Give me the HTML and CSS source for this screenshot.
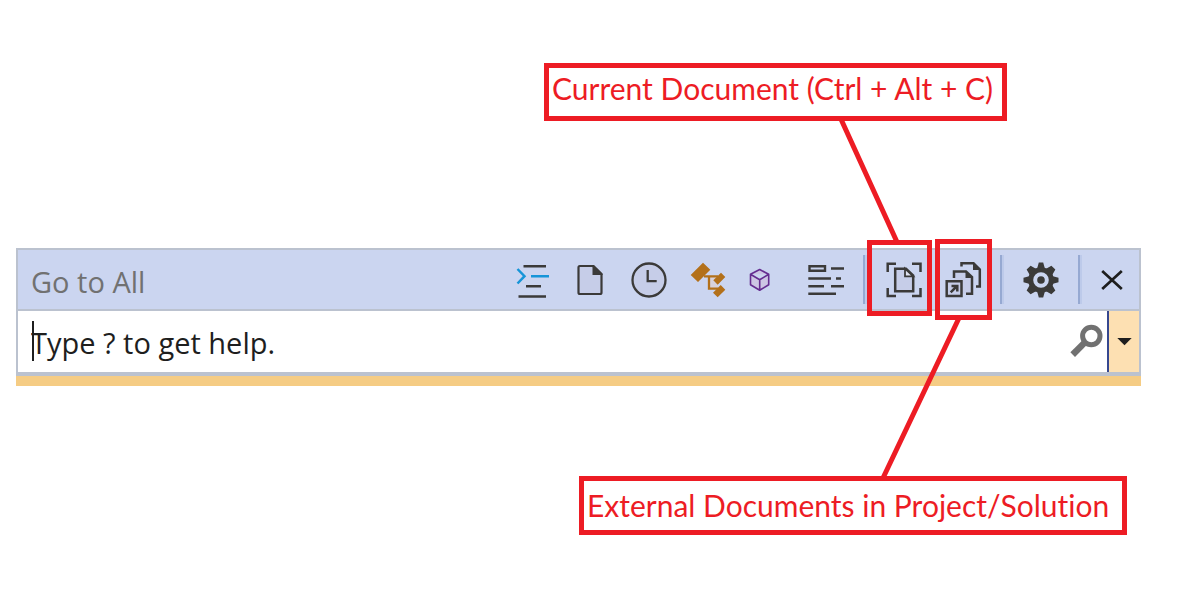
FILE: index.html
```html
<!DOCTYPE html>
<html lang="en">
<head>
<meta charset="utf-8">
<title>Go to All</title>
<link rel="stylesheet" href="styles.css">
</head>
<body>
<main class="stage">
  <section class="panel">
    <header class="toolbar">
      <h1 class="title">Go to All</h1>
      <button class="tool" aria-label="Go to line">
        <svg viewBox="502 250 59 59" fill="none" stroke="#3b3a39" stroke-width="2.5"><path d="M523.5 266.2H546M526 286.2H541M518.5 296.5H546"/><path stroke="#1695d8" d="M531 276.3H549M517.5 269L524.5 276.2L517.5 283.5"/></svg>
      </button>
      <button class="tool" aria-label="Files">
        <svg viewBox="561 250 59 59"><path d="M579.8 266H593L601.5 274.500V292.500Q601.5 294 600 294H580Q578.500 294 578.500 292.500V267.500Q578.500 266 579.800 266Z" fill="#c6cde8" stroke="#3b3a39" stroke-width="2.2"/><path d="M592.5 265H594L602.6 273.600V275H592.500Z" fill="#3b3a39"/></svg>
      </button>
      <button class="tool" aria-label="Recent files">
        <svg viewBox="620 250 59 59" fill="none" stroke="#3b3a39" stroke-width="2.3"><circle cx="649" cy="280" r="16.500" fill="#c6cde8"/><path d="M647.700 270V281.200H656.700"/></svg>
      </button>
      <button class="tool" aria-label="Types">
        <svg viewBox="679 250 59 59" fill="#b3701a"><path d="M708 276H718V289H709Z" fill="#d8d2dc"/><path d="M704 276.300H718M709 276V288.600H718" fill="none" stroke="#b3701a" stroke-width="2.300"/><path d="M703 262.700L710.300 269.700L698 282L690.700 275ZM721 272.700L725.300 277L717.700 284.700L713.300 280.300ZM720.700 285L725.300 289.700L717.700 297.300L713 292.700Z"/></svg>
      </button>
      <button class="tool" aria-label="Members">
        <svg viewBox="738 250 59 59" fill="#cdc6e4" stroke="#652d90" stroke-width="1.6" stroke-linejoin="round"><path d="M759.700 269.500L768.700 274.300V284.800L759.700 290.200L750.500 284.800V274.300ZM750.500 274.300L759.700 279.700L768.700 274.300M759.700 279.700V290.200"/></svg>
      </button>
      <button class="tool" aria-label="Symbols">
        <svg viewBox="797 250 59 59" fill="none" stroke="#3b3a39" stroke-width="2.400"><path d="M809.500 266.300H825V270.800H809.500ZM831 268.500H844M808.300 278.500H831M836 278.500H841M808.300 286.300H824M831 286.300H844M808.300 293.800H836"/></svg>
      </button>
      <span class="separator"></span>
      <button class="tool" aria-label="Current document (Ctrl + Alt + C)">
        <svg viewBox="875 250 59 59" fill="none" stroke="#3b3a39" stroke-width="2.500"><path d="M896 263.800H887.700V272M912 263.800H920.500V272M896 296H887.700V288M912 296H920.500V288"/><path fill="#c6cde8" d="M895.200 268.700H906L913.200 275.500V291.300H895.200Z"/><path fill="#dfe2f1" stroke-width="1.800" d="M905 268.500V276.300H913.200Z"/></svg>
      </button>
      <button class="tool" aria-label="External documents in project or solution">
        <svg viewBox="934 250 59 59" fill="none" stroke="#3b3a39" stroke-width="2.500"><path d="M961.500 266.500V263.300H973.500L979.800 269.500V286.500H976"/><path d="M973 262.500L980.500 270H973Z" fill="#3b3a39" stroke="none"/><path fill="#c6cde8" stroke="none" d="M954 271.500H966L972 277V293.700H962V280H954Z"/><path d="M954 278V271.500H966L972 277V293.700H966"/><path d="M965.500 270.500L973 278H965.500Z" fill="#3b3a39" stroke="none"/><path fill="#c6cde8" d="M946.700 281.300H961.500V296H946.700Z"/><path d="M950.700 292.300L957 286M951.500 286H957.300V291.500"/></svg>
      </button>
      <span class="separator"></span>
      <button class="tool" aria-label="Settings">
        <svg viewBox="1012 250 59 59"><g transform="translate(1041 280)" fill="#3b3a39"><circle r="12.800"/><path d="M-4 -11L-2.200 -17.500H2.200L4 -11ZM-4 11L-2.200 17.500H2.200L4 11ZM-11 -4L-17.500 -2.200V2.200L-11 4ZM11 -4L17.500 -2.200V2.200L11 4Z"/><path transform="rotate(45)" d="M-4.500 -11L-2.800 -17.500H2.800L4.500 -11ZM-4.500 11L-2.800 17.500H2.800L4.500 11ZM-11 -4.500L-17.500 -2.800V2.800L-11 4.500ZM11 -4.500L17.500 -2.800V2.800L11 4.500Z"/><circle r="5.800" fill="none" stroke="#cbd5f0" stroke-width="4"/></g></svg>
      </button>
      <span class="separator"></span>
      <button class="tool close" aria-label="Close">
        <svg viewBox="1090 250 49 59" fill="none" stroke="#1e1e1e" stroke-width="2.700"><path d="M1102.200 271L1121.800 289M1121.800 271L1102.200 289"/></svg>
      </button>
    </header>
    <div class="search">
      <span class="caret"></span>
      <input class="query" type="text" placeholder="Type ? to get help." aria-label="Search">
      <button class="find" aria-label="Find">
        <svg viewBox="1067 311 40 61" fill="none" stroke="#717171"><circle cx="1091.300" cy="336" r="8.700" stroke-width="5"/><path d="M1085.500 341.800L1072.700 354.600" stroke-width="6.500"/></svg>
      </button>
      <button class="more" aria-label="Search options">
        <svg viewBox="1109 311 30 61"><path d="M1117.300 338H1131.700L1124.500 345.300Z" fill="#1e1e1e"/></svg>
      </button>
    </div>
    <div class="accent"></div>
  </section>
  <div class="notes">
    <svg class="connectors" viewBox="545 0 650 594" stroke="#ed1c24" stroke-width="5"><path d="M840 117L897 242M959 318L883 478"/></svg>
    <span class="frame frame-current"></span>
    <span class="frame frame-external"></span>
    <p class="label label-current">Current Document (Ctrl + Alt + C)</p>
    <p class="label label-external">External Documents in Project/Solution</p>
  </div>
</main>
</body>
</html>
```
FILE: styles.css
```css
* { box-sizing: border-box; }
body {
  margin: 0;
  background: #fff;
  color: #1e1e1e;
  font-family: "Open Sans", "Noto Sans", sans-serif;
}
button {
  margin: 0;
  padding: 0;
  border: 0;
  background: none;
}
svg { display: block; }
.stage {
  position: relative;
  min-height: 594px;
  padding: 248px 54px 0 16px;
}
.panel { min-width: 720px; }
.toolbar {
  display: flex;
  align-items: center;
  border: 2px solid #bbc2cf;
  background: #cbd5f0;
}
.title {
  flex: 1;
  margin: 0;
  padding: 4px 0 0 13px;
  color: #717171;
  font-size: 29px;
  line-height: 40px;
  font-weight: 400;
}
.tool, .tool svg {
  width: 59px;
  height: 59px;
}
.close, .close svg { width: 49px; }
.separator {
  width: 4px;
  height: 49px;
  margin: 0 8px 0 7px;
  border-left: 2px solid #96a9d2;
  background: #bdcaea;
}
.search {
  position: relative;
  display: flex;
  border: solid #bbc2cf;
  border-width: 0 2px 4px;
  background: #fff;
}
.query {
  flex: 1;
  min-width: 0;
  padding: 2px 0 0 13px;
  border: 0;
  outline: 0;
  background: none;
  color: #1e1e1e;
  font: 29px "Open Sans", "Noto Sans", sans-serif;
}
.query::placeholder {
  color: #1e1e1e;
  opacity: 1;
}
.caret {
  position: absolute;
  left: 14px;
  top: 10px;
  width: 2px;
  height: 40px;
  background: #1e1e1e;
}
.find svg {
  width: 40px;
  height: 61px;
}
.more {
  border-left: 2px solid #36488f;
  background: #fde0b2;
}
.more svg {
  width: 30px;
  height: 61px;
}
.accent {
  height: 10px;
  background: #f5cc84;
}
.notes {
  position: absolute;
  top: 0;
  right: 0;
  width: 650px;
  height: 594px;
  pointer-events: none;
}
.connectors {
  width: 650px;
  height: 594px;
}
.frame, .label {
  position: absolute;
  border: 5px solid #ed1c24;
}
.frame-current {
  top: 240px;
  right: 263px;
  width: 65px;
  height: 76px;
}
.frame-external {
  top: 239px;
  right: 203px;
  width: 57px;
  height: 81px;
}
.label {
  margin: 0;
  padding: 0 3px;
  background: #fff;
  color: #ed1c24;
  font-family: Lato, "Open Sans", sans-serif;
  font-size: 30px;
  font-variant-ligatures: none;
  line-height: 40px;
  white-space: nowrap;
}
.label-current {
  top: 63px;
  right: 188px;
  width: 463px;
  height: 58px;
}
.label-external {
  top: 476px;
  right: 68px;
  width: 548px;
  height: 59px;
  padding-top: 4px;
}
```
